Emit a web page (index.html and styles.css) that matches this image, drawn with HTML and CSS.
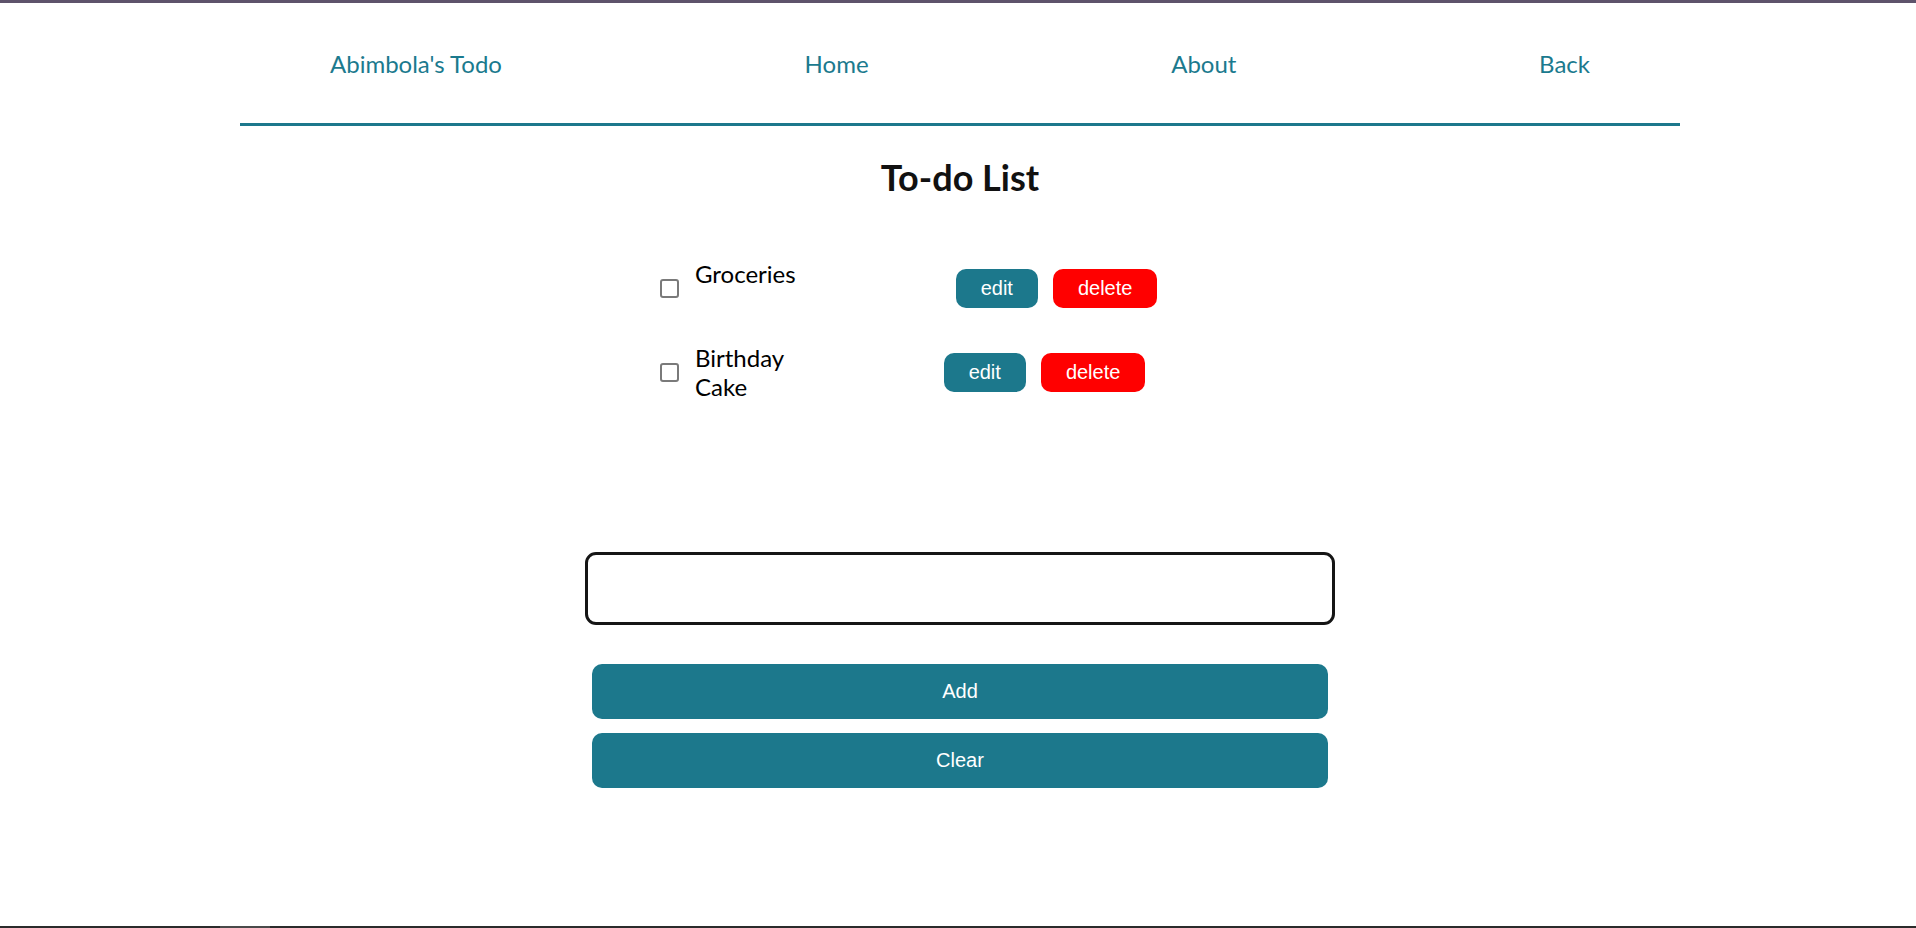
FILE: index.html
```html
<!DOCTYPE html>
<html lang="en">
<head>
<meta charset="utf-8">
<title>Abimbola's Todo</title>
<link rel="stylesheet" href="styles.css">
</head>
<body>
<div class="topbar"></div>
<div class="page">
  <nav class="nav">
    <a class="nav-link" href="#">Abimbola's Todo</a>
    <a class="nav-link" href="#">Home</a>
    <a class="nav-link" href="#">About</a>
    <a class="nav-link" href="#">Back</a>
  </nav>
  <h1 class="title">To-do List</h1>
  <ul class="list">
    <li class="item">
      <input type="checkbox" class="check">
      <span class="label">Groceries</span>
      <button class="btn edit">edit</button>
      <button class="btn delete">delete</button>
    </li>
    <li class="item">
      <input type="checkbox" class="check">
      <span class="label">Birthday Cake</span>
      <button class="btn edit">edit</button>
      <button class="btn delete">delete</button>
    </li>
  </ul>
  <div class="form">
    <input type="text" class="field">
    <button class="wide add">Add</button>
    <button class="wide clear">Clear</button>
  </div>
</div>
<div class="bottombar"><span class="thumb"></span></div>
</body>
</html>
```

FILE: styles.css
```css
html, body {
  margin: 0;
  padding: 0;
}
body {
  height: 100vh;
  display: flex;
  flex-direction: column;
  overflow: hidden;
  font-family: Lato, "Open Sans", sans-serif;
  background: #ffffff;
  color: #111111;
}
.topbar {
  height: 3px;
  flex: none;
  background: #5e536b;
}
.page {
  flex: 1;
  overflow: hidden;
  padding-left: 4px;
}
.nav {
  width: 1440px;
  margin: 0 auto;
  height: 123px;
  box-sizing: border-box;
  padding: 0 90px;
  border-bottom: 3px solid #1c788c;
  display: flex;
  justify-content: space-between;
  align-items: center;
}
.nav-link {
  color: #1b7a8e;
  font-size: 24px;
  text-decoration: none;
}
.title {
  margin: 30px 0 0;
  text-align: center;
  font-size: 36px;
  line-height: 43px;
  font-weight: 700;
  color: #111111;
}
.list {
  list-style: none;
  margin: 60px auto 0;
  padding: 0;
  width: 600px;
  display: flex;
  flex-direction: column;
  gap: 26px;
}
.item {
  display: flex;
  align-items: center;
}
.check {
  appearance: none;
  -webkit-appearance: none;
  box-sizing: border-box;
  width: 19px;
  height: 19px;
  margin: 0 16px 0 0;
  border: 2px solid #7a7a7a;
  border-radius: 3px;
  background: #ffffff;
  flex: none;
}
.label {
  width: min-content;
  min-height: 58px;
  font-size: 24px;
  line-height: 29px;
  color: #000000;
  margin-right: 160px;
}
.btn {
  font-family: "Liberation Sans", Arial, sans-serif;
  font-size: 20px;
  color: #ffffff;
  border: none;
  border-radius: 10px;
  height: 39px;
  padding: 0 25px;
  cursor: pointer;
}
.edit {
  background: #1c788c;
}
.delete {
  background: #ff0000;
  margin-left: 15px;
}
.form {
  width: 750px;
  margin: 151px auto 0;
  display: flex;
  flex-direction: column;
  align-items: center;
}
.field {
  width: 750px;
  height: 73px;
  box-sizing: border-box;
  border: 3px solid #151515;
  border-radius: 11px;
  outline: none;
  padding: 0 12px;
  font-size: 20px;
}
.wide {
  width: 736px;
  height: 55px;
  border: none;
  border-radius: 10px;
  background: #1c788c;
  color: #ffffff;
  font-family: "Liberation Sans", Arial, sans-serif;
  font-size: 20px;
}
.add {
  margin-top: 39px;
}
.clear {
  margin-top: 14px;
}
.bottombar {
  height: 2px;
  flex: none;
  background: #2b2b2b;
  display: flex;
}
.thumb {
  margin-left: 220px;
  width: 50px;
  background: #4a4a4a;
}
```
